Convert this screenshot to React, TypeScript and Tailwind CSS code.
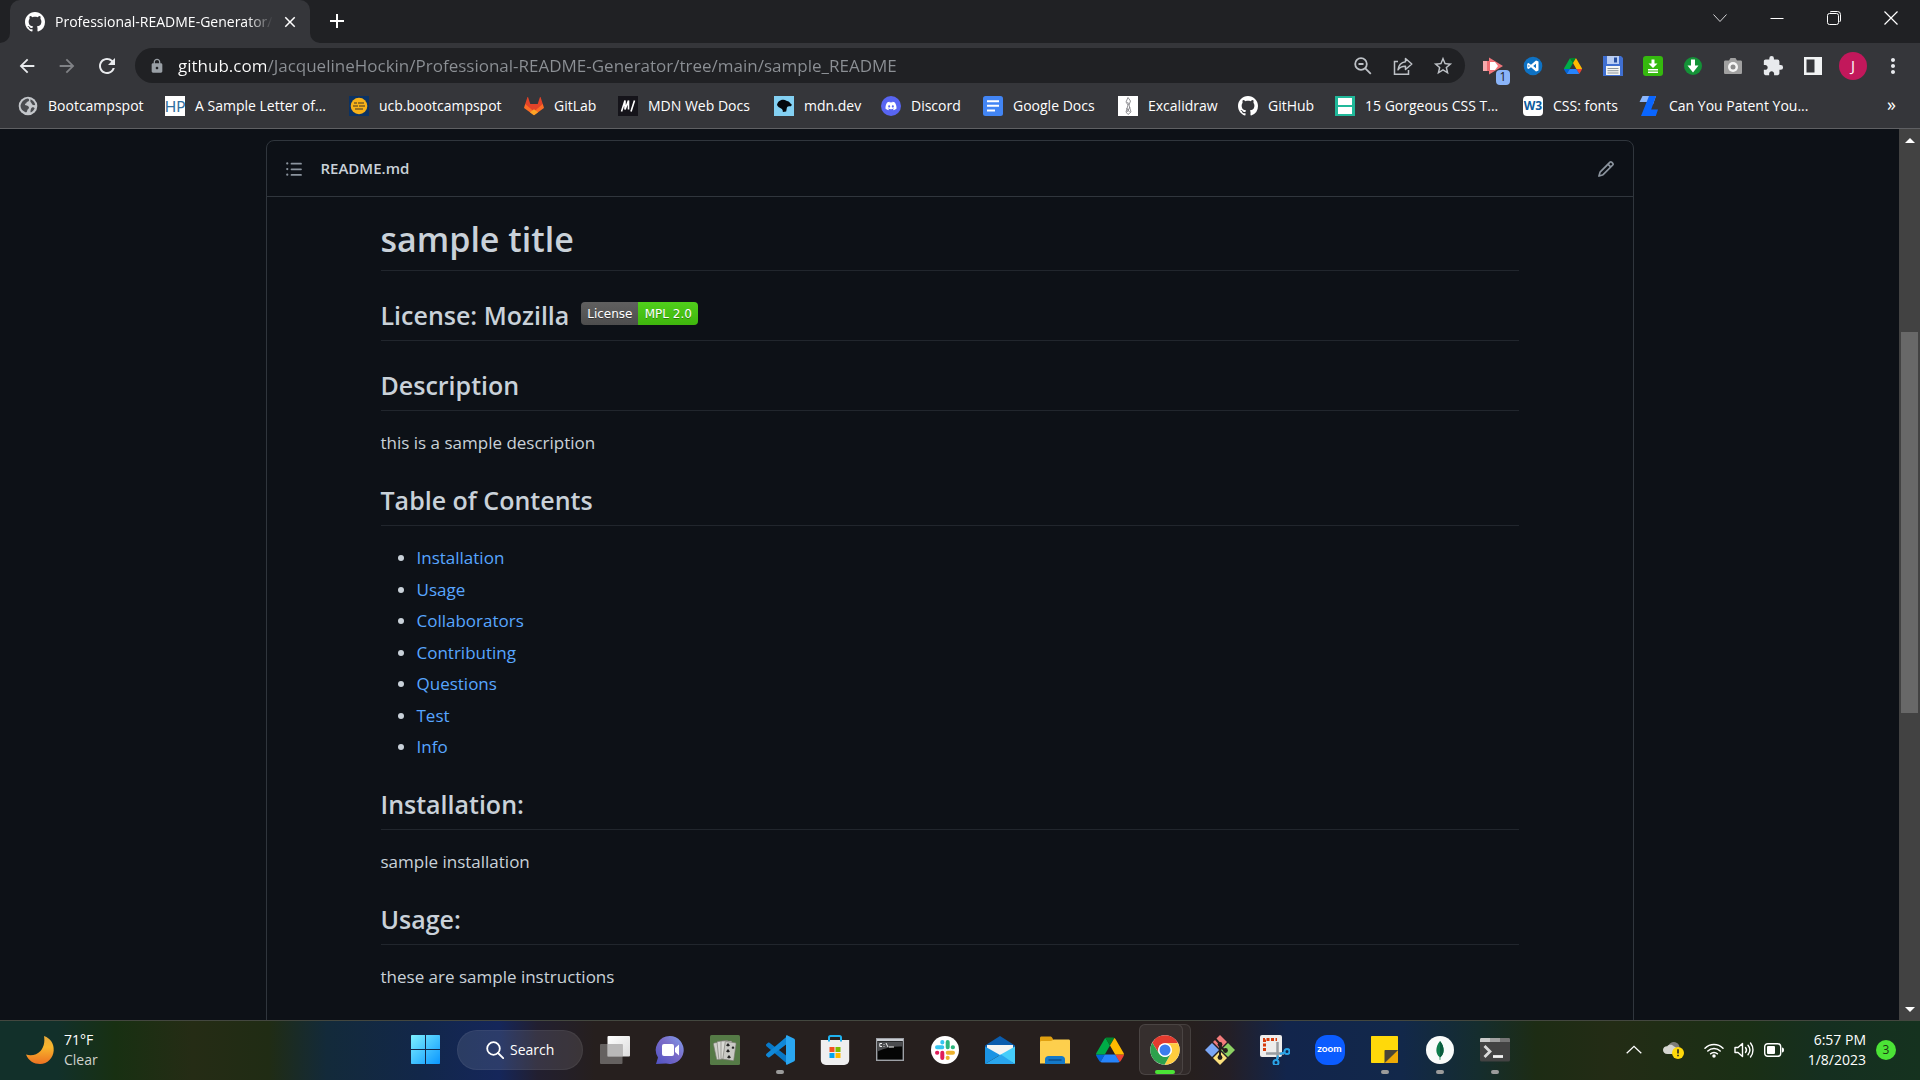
import type { ReactNode } from "react";
import {
  MdArrowBack,
  MdArrowForward,
  MdRefresh,
  MdLock,
  MdStarBorder,
  MdExtension,
  MdMoreVert,
  MdClose,
  MdAdd,
} from "react-icons/md";
import { FaDiscord } from "react-icons/fa";

/* ---------- shared logos ---------- */

function GithubMark() {
  return (
    <svg viewBox="0 0 16 16" className="size-5 shrink-0" fill="#fff" aria-hidden="true">
      <path d="M8 0C3.58 0 0 3.58 0 8c0 3.54 2.29 6.53 5.47 7.59.4.07.55-.17.55-.38 0-.19-.01-.82-.01-1.49-2.01.37-2.53-.49-2.69-.94-.09-.23-.48-.94-.82-1.13-.28-.15-.68-.52-.01-.53.63-.01 1.08.58 1.23.82.72 1.21 1.87.87 2.33.66.07-.52.28-.87.51-1.07-1.78-.2-3.64-.89-3.64-3.95 0-.87.31-1.59.82-2.15-.08-.2-.36-1.02.08-2.12 0 0 .67-.21 2.2.82.64-.18 1.32-.27 2-.27.68 0 1.36.09 2 .27 1.53-1.04 2.2-.82 2.2-.82.44 1.1.16 1.92.08 2.12.51.56.82 1.27.82 2.15 0 3.07-1.87 3.75-3.65 3.95.29.25.54.73.54 1.48 0 1.07-.01 1.93-.01 2.2 0 .21.15.46.55.38A8.013 8.013 0 0 0 16 8c0-4.42-3.58-8-8-8z" />
    </svg>
  );
}

function ListIcon() {
  return (
    <svg viewBox="0 0 16 16" className="size-[18px]" fill="currentColor" aria-hidden="true">
      <path d="M5.75 2.5h8.5a.75.75 0 0 1 0 1.5h-8.5a.75.75 0 0 1 0-1.5Zm0 5h8.5a.75.75 0 0 1 0 1.5h-8.5a.75.75 0 0 1 0-1.5Zm0 5h8.5a.75.75 0 0 1 0 1.5h-8.5a.75.75 0 0 1 0-1.5ZM2 14a1 1 0 1 1 0-2 1 1 0 0 1 0 2Zm1-6a1 1 0 1 1-2 0 1 1 0 0 1 2 0ZM2 4a1 1 0 1 1 0-2 1 1 0 0 1 0 2Z" />
    </svg>
  );
}

function PencilIcon() {
  return (
    <svg viewBox="0 0 16 16" className="size-[18px]" fill="currentColor" aria-hidden="true">
      <path d="M11.013 1.427a1.75 1.75 0 0 1 2.474 0l1.086 1.086a1.75 1.75 0 0 1 0 2.474l-8.61 8.61c-.21.21-.47.364-.756.445l-3.251.93a.75.75 0 0 1-.927-.928l.929-3.25c.081-.286.235-.547.445-.758l8.61-8.61Zm.176 4.823L9.75 4.81l-6.286 6.287a.253.253 0 0 0-.064.108l-.558 1.953 1.953-.558a.253.253 0 0 0 .108-.064Zm1.238-3.763a.25.25 0 0 0-.354 0L10.811 3.75l1.439 1.44 1.263-1.263a.25.25 0 0 0 0-.354Z" />
    </svg>
  );
}

function DriveLogo({ className }: { className: string }) {
  return (
    <svg viewBox="0 0 87.3 78" className={className} aria-hidden="true">
      <path d="m6.6 66.85 3.85 6.65c.8 1.4 1.95 2.5 3.3 3.3l13.75-23.8h-27.5c0 1.55.4 3.1 1.2 4.5z" fill="#0066da" />
      <path d="m43.65 25-13.75-23.8c-1.35.8-2.5 1.9-3.3 3.3l-25.4 44a9.06 9.06 0 0 0 -1.2 4.5h27.5z" fill="#00ac47" />
      <path d="m73.55 76.8c1.35-.8 2.5-1.9 3.3-3.3l1.6-2.75 7.65-13.25c.8-1.4 1.2-2.95 1.2-4.5h-27.5l5.85 11.5z" fill="#ea4335" />
      <path d="m43.65 25 13.75-23.8c-1.35-.8-2.9-1.2-4.5-1.2h-18.5c-1.6 0-3.15.45-4.5 1.2z" fill="#00832d" />
      <path d="m59.8 53h-32.3l-13.75 23.8c1.35.8 2.9 1.2 4.5 1.2h50.8c1.6 0 3.15-.45 4.5-1.2z" fill="#2684fc" />
      <path d="m73.4 26.5-12.7-22c-.8-1.4-1.95-2.5-3.3-3.3l-13.75 23.8 16.15 28h27.45c0-1.55-.4-3.1-1.2-4.5z" fill="#ffba00" />
    </svg>
  );
}

/* ---------- bookmark icons ---------- */

function GlobeIcon() {
  return (
    <svg viewBox="0 0 20 20" className="size-5">
      <circle cx="10" cy="10" r="9.3" fill="#c4c7cb" />
      <path d="M10 2.6c2 1 1.2 3-.6 3.2-1 .2-.6 1.5-1.6 1.8-1 .3-1.2 1.2-.2 1.6 1.6.5 3.4.8 3.4 2.4 0 1.4-1.7 1.7-1.9 3.3-.1 1-.8 1.7-1.7 1.3C4.6 15 2.5 12.8 2.5 9.8 3.5 6 6 3 10 2.6Z" fill="#4a4c50" />
      <path d="M12.5 3.2c2.4.9 4.3 3 4.7 5.6-1.3 1-3-.1-3.5-1.3-.4-1-1.6-1.3-1.3-2.5Z M14.5 11.2c1 0 1.9.5 2.2 1-.7 1.9-2.2 3.4-4 4.2-.5-1.6.3-5 1.8-5.2Z" fill="#4a4c50" />
    </svg>
  );
}

function HpIcon() {
  return (
    <span className="flex size-5 items-center justify-center bg-white font-['Lato',sans-serif] text-[15px] leading-5 text-[#2f6f9f]">
      HP
    </span>
  );
}

function UcbIcon() {
  return (
    <svg viewBox="0 0 20 20" className="size-5">
      <rect width="20" height="20" fill="#0b3263" />
      <circle cx="10" cy="10" r="8.3" fill="#f7b219" />
      <path d="M5 7h3M9 7h6M4 10h5M10 10h6M6 13h8" stroke="#7c5f22" strokeWidth="1.5" />
    </svg>
  );
}

function GitlabIcon() {
  return (
    <svg viewBox="0 0 20 20" className="size-5">
      <path d="M1.2 8 .1 11.4c-.1.3 0 .7.3.9L10 19.2 19.6 12.3c.3-.2.4-.6.3-.9L18.8 8Z" fill="#fc6d26" />
      <path d="M1.2 8h5.1L4.1 1.2c-.1-.4-.6-.4-.7 0ZM18.8 8h-5.1l2.2-6.8c.1-.4.6-.4.7 0Z" fill="#e24329" />
      <path d="M1.2 8h17.6L10 15.5Z" fill="#e24329" />
      <path d="m6 16.3 4-3 4 3-4 2.9Z" fill="#fca326" />
    </svg>
  );
}

function MdnIcon() {
  return (
    <svg viewBox="0 0 20 20" className="size-5">
      <rect width="20" height="20" fill="#15141a" />
      <path d="M3.500 15.500 7 4.500v9l3.500-9v9M13 15.500l3.500-11" fill="none" stroke="#fff" strokeWidth="1.6" />
    </svg>
  );
}

function MdnDevIcon() {
  return (
    <svg viewBox="0 0 20 20" className="size-5">
      <rect width="20" height="20" fill="#83d0f2" />
      <path d="M3 9c.5-3 3-5.5 6.500-5.300 2 0 3 1.200 4.500 1.500 1.500.5 1.800 2 3.600 3 .3 1.500-.6 2.300-2 2-1.500-.3-2.500.4-2.800 1.800l-.6 3.500-3.400.5c.3-1.700-.4-3-1.800-3.600C5.500 11.600 4 11 3 9Z" fill="#05080c" />
    </svg>
  );
}

function DocsIcon() {
  return (
    <svg viewBox="0 0 20 20" className="size-5">
      <rect width="20" height="20" rx="2.5" fill="#4285f4" />
      <path d="M4 5.3h12M4 9.8h12M4 14.5h8" stroke="#fff" strokeWidth="2" />
    </svg>
  );
}

function ExcalidrawIcon() {
  return (
    <svg viewBox="0 0 20 20" className="size-5">
      <rect width="20" height="20" fill="#fff" />
      <path d="m8 6 2-4.500L12.500 5 11 9l2 7-3 2.500L8 16l2-7Zm1.500 0L11 9M8.500 12l3 4M12 11l-3 5" fill="none" stroke="#77777c" strokeWidth=".8" />
    </svg>
  );
}

function GorgeousIcon() {
  return (
    <svg viewBox="0 0 20 20" className="size-5">
      <rect width="20" height="20" fill="#20b89a" />
      <path d="M3 2h14v7H3Zm0 9h14v7H3Z" fill="#fff" />
    </svg>
  );
}

function W3Icon() {
  return (
    <span className="flex size-5 items-center justify-center rounded-sm bg-white font-['Open_Sans',sans-serif] text-xs font-bold leading-5 text-[#0b5a9c]">
      W3
    </span>
  );
}

function PatentIcon() {
  return (
    <svg viewBox="0 0 20 20" className="size-5">
      <path d="M3.5 0H17l-3 8.500H7.300l.9-2.500H.5Z" fill="#8db7fb" />
      <path d="M10 0h7l-4.800 13.500H19L16.800 20H2Z" fill="#0a66ff" />
    </svg>
  );
}

const bookmarks: { label: string; icon: ReactNode; width: string }[] = [
  { label: "Bootcampspot", icon: <GlobeIcon />, width: "w-[147px]" },
  { label: "A Sample Letter of...", icon: <HpIcon />, width: "w-[184px]" },
  { label: "ucb.bootcampspot", icon: <UcbIcon />, width: "w-[175px]" },
  { label: "GitLab", icon: <GitlabIcon />, width: "w-[94px]" },
  { label: "MDN Web Docs", icon: <MdnIcon />, width: "w-[156px]" },
  { label: "mdn.dev", icon: <MdnDevIcon />, width: "w-[107px]" },
  {
    label: "Discord",
    icon: (
      <span className="flex size-5 items-center justify-center rounded-full bg-[#5865f2]">
        <FaDiscord className="size-3 text-white" />
      </span>
    ),
    width: "w-[102px]",
  },
  { label: "Google Docs", icon: <DocsIcon />, width: "w-[135px]" },
  { label: "Excalidraw", icon: <ExcalidrawIcon />, width: "w-[120px]" },
  { label: "GitHub", icon: <GithubMark />, width: "w-[97px]" },
  { label: "15 Gorgeous CSS T...", icon: <GorgeousIcon />, width: "w-[188px]" },
  { label: "CSS: fonts", icon: <W3Icon />, width: "w-[116px]" },
  { label: "Can You Patent You...", icon: <PatentIcon />, width: "w-[170px]" },
];

/* ---------- browser chrome ---------- */

function TabStrip() {
  const control = "flex h-9 w-[57px] items-center justify-center";
  return (
    <div className="flex h-[43px] items-start bg-[#202124] pl-[10px]">
      <div className="relative flex h-[43px] w-[300px] items-center rounded-t-[10px] bg-[#35363a] pl-[15px] pr-2">
        <GithubMark />
        <span className="ml-[10px] w-[218px] overflow-hidden whitespace-nowrap text-sm text-white [mask-image:linear-gradient(90deg,#000_88%,transparent)]">
          Professional-README-Generator/
        </span>
        <button aria-label="Close tab" className="ml-auto flex size-6 items-center justify-center text-white">
          <MdClose className="size-[18px]" />
        </button>
        <svg viewBox="0 0 10 10" className="absolute -left-[10px] bottom-0 size-[10px]">
          <path d="M10 0v10H0A10 10 0 0 0 10 0Z" fill="#35363a" />
        </svg>
        <svg viewBox="0 0 10 10" className="absolute -right-[10px] bottom-0 size-[10px]">
          <path d="M0 0v10h10A10 10 0 0 1 0 0Z" fill="#35363a" />
        </svg>
      </div>
      <button aria-label="New tab" className="ml-[15px] flex h-[42px] w-6 items-center justify-center text-white">
        <MdAdd className="size-6" />
      </button>
      <div className="ml-auto flex pr-px text-white">
        <button aria-label="Search tabs" className={control}>
          <svg viewBox="0 0 14 14" className="size-[14px]">
            <path d="m.5 3.5 6.500 7 6.500-7" fill="none" stroke="#d5d6d8" />
          </svg>
        </button>
        <button aria-label="Minimize" className={control}>
          <svg viewBox="0 0 14 14" className="size-[14px]">
            <path d="M.5 7.5h13" stroke="currentColor" />
          </svg>
        </button>
        <button aria-label="Restore" className={control}>
          <svg viewBox="0 0 14 14" className="size-[14px]">
            <rect x=".5" y="2.500" width="11" height="11" rx="2" fill="none" stroke="currentColor" />
            <path d="M3 1C3.500.7 4 .5 5 .5h5.500a3 3 0 0 1 3 3V9c0 1-.3 1.500-1 2" fill="none" stroke="currentColor" />
          </svg>
        </button>
        <button aria-label="Close" className={control}>
          <svg viewBox="0 0 14 14" className="size-[14px]">
            <path d="m.5.5 13 13m0-13-13 13" stroke="currentColor" strokeWidth="1.2" />
          </svg>
        </button>
      </div>
    </div>
  );
}

const extensions: { name: string; icon: ReactNode }[] = [
  {
    name: "Screencast, 1 alert",
    icon: (
      <span className="relative flex size-5 items-center justify-center">
        <svg viewBox="0 0 20 20" className="size-5">
          <path d="M6 1.5 20 10 6 18.5Z" fill="#f2777c" />
          <path d="M0 5h11v10H0Z" fill="#ef6e73" />
          <path d="M7 6h5l3 4-3 4H7Z" fill="#fff" />
          <path d="M0 5h4v10H0Z" fill="#f6a9ac" />
        </svg>
        <span className="absolute -bottom-[9px] -right-[7px] flex h-[15px] w-[14px] items-center justify-center rounded-sm bg-[#8ab4f8] text-xs leading-none text-[#202124]">
          1
        </span>
      </span>
    ),
  },
  {
    name: "Code viewer",
    icon: (
      <svg viewBox="0 0 20 20" className="size-5">
        <circle cx="10" cy="10" r="9.3" fill="#0e72c4" />
        <path d="m13 4.500 2.500 1v9l-2.500 1-5-4.200L5.500 13 4.200 12.200V7.800L5.500 7 8 8.700Zm0 3.300L10.200 10 13 12.200ZM5.500 8.800v2.400L6.800 10Z" fill="#fff" fillRule="evenodd" />
      </svg>
    ),
  },
  { name: "Google Drive", icon: <DriveLogo className="size-[18px]" /> },
  {
    name: "Save page",
    icon: (
      <svg viewBox="0 0 20 20" className="size-5">
        <path d="M0 0h18l2 2v18H0Z" fill="#3f6fd1" />
        <path d="M4 0h12v8H4Z" fill="#b9cdf3" />
        <path d="M11 1.500h3v5h-3Z" fill="#274f9f" />
        <path d="M3 10h14v9H3Z" fill="#f4f6f4" />
        <path d="M4.500 12.500h11M4.500 14.700h11M4.500 17h11" stroke="#8c949a" />
      </svg>
    ),
  },
  {
    name: "Download helper",
    icon: (
      <svg viewBox="0 0 20 20" className="size-5">
        <rect width="20" height="20" rx="3" fill="#35b90e" />
        <path d="M8.500 3.500h3v4h3L10 12 5.500 7.500h3ZM5 13h10v1.500H5Zm0 2.500h10V17H5Z" fill="#fff" />
      </svg>
    ),
  },
  {
    name: "Downloads",
    icon: (
      <svg viewBox="0 0 20 20" className="size-5">
        <circle cx="10" cy="10" r="9" fill="#149237" />
        <path d="M8 3.500h4v6h3.500L10 16.500 4.500 9.500H8Z" fill="#fff" />
      </svg>
    ),
  },
  {
    name: "Screenshot",
    icon: (
      <svg viewBox="0 0 20 20" className="size-5">
        <path d="M2.500 4.500H6L7.500 2h5L14 4.500h3.500c1 0 1.500.5 1.500 1.500v10.500c0 1-.5 1.500-1.500 1.500h-15C1.500 18 1 17.500 1 16.500V6c0-1 .5-1.500 1.500-1.500Z" fill="#a1a1a1" />
        <circle cx="10" cy="11" r="5" fill="#f5f5f5" />
        <circle cx="10" cy="11" r="2.5" fill="#8c8c8c" />
      </svg>
    ),
  },
  { name: "Extensions", icon: <MdExtension className="size-[22px] text-[#e8eaed]" /> },
  {
    name: "Side panel",
    icon: (
      <svg viewBox="0 0 18 18" className="size-[18px]">
        <path d="M0 0h18v18H0Zm2.500 2.500v13h8v-13Z" fill="#f1f3f4" fillRule="evenodd" />
      </svg>
    ),
  },
  {
    name: "Profile J",
    icon: (
      <span className="flex size-7 items-center justify-center rounded-full bg-[#c2185b] text-[15px] leading-none text-white">
        J
      </span>
    ),
  },
  { name: "Menu", icon: <MdMoreVert className="size-6 text-[#e8eaed]" /> },
];

function Toolbar() {
  const nav = "flex h-9 w-10 items-center justify-center text-[#e8eaed]";
  return (
    <div className="flex h-[45px] items-center gap-2 px-[7px]">
      <div className="flex">
        <button aria-label="Back" className={nav}>
          <MdArrowBack className="size-[22px]" />
        </button>
        <button aria-label="Forward" className="flex h-9 w-10 items-center justify-center text-[#808286]">
          <MdArrowForward className="size-[22px]" />
        </button>
        <button aria-label="Reload" className={nav}>
          <MdRefresh className="size-6" />
        </button>
      </div>
      <div className="flex h-[35px] min-w-0 flex-1 items-center rounded-full bg-[#202124] pl-[14px] pr-0.5">
        <MdLock className="size-4 shrink-0 text-[#9aa0a6]" />
        <input
          aria-label="Address"
          readOnly
          value="github.com/JacquelineHockin/Professional-README-Generator/tree/main/sample_README"
          className="ml-[13px] h-[35px] min-w-0 flex-1 bg-[linear-gradient(90deg,#fff_88px,#8c9095_88px)] bg-clip-text text-[17px] leading-[35px] text-transparent outline-none"
        />
        <div className="flex">
          <button aria-label="Zoom" className={nav}>
            <svg viewBox="0 0 18 18" className="size-[18px]" fill="none" stroke="#bdc1c6" strokeWidth="1.8">
              <circle cx="7" cy="7" r="5.8" />
              <path d="m11.300 11.300 5.500 5.500M4.500 7h5" />
            </svg>
          </button>
          <button aria-label="Share" className={nav}>
            <svg viewBox="0 0 20 20" className="size-5" fill="none" stroke="#bdc1c6" strokeWidth="1.5">
              <path d="M5 5.500H1.500v12.800h14V14" />
              <path d="M12.500 2.500 18.800 8l-6.300 5.500V10.300C9.500 10.200 7 11 5 13.800 5.500 9.500 8 6.300 12.500 5.700Z" strokeLinejoin="round" />
            </svg>
          </button>
          <button aria-label="Bookmark" className={nav}>
            <MdStarBorder className="size-[22px] text-[#bdc1c6]" />
          </button>
        </div>
      </div>
      <div className="flex">
        {extensions.map((e) => (
          <button key={e.name} aria-label={e.name} className="flex h-9 w-10 items-center justify-center">
            {e.icon}
          </button>
        ))}
      </div>
    </div>
  );
}

function BookmarkBar() {
  return (
    <nav aria-label="Bookmarks" className="flex h-[41px] items-center border-b border-[#5f6063] pb-1 pl-[18px] pr-6">
      {bookmarks.map((b) => (
        <a key={b.label} href="#" className={`${b.width} flex shrink-0 items-center gap-[10px] text-sm text-white`}>
          <span className="shrink-0">{b.icon}</span>
          <span className="whitespace-nowrap">{b.label}</span>
        </a>
      ))}
      <button aria-label="More bookmarks" className="ml-auto pb-1 text-lg leading-none text-white">
        »
      </button>
    </nav>
  );
}

/* ---------- page ---------- */

const contents = ["Installation", "Usage", "Collaborators", "Contributing", "Questions", "Test", "Info"];

function Heading({ id, children }: { id?: string; children: ReactNode }) {
  return (
    <h2
      id={id}
      className="mt-[27px] flex items-center gap-3 border-b border-[#21262d] pb-2 text-[25px] font-semibold leading-[34px]"
    >
      {children}
    </h2>
  );
}

function Paragraph({ children }: { children: ReactNode }) {
  return <p className="mt-[18px] text-[17px] leading-[27px]">{children}</p>;
}

function LicenseBadge() {
  return (
    <span className="mb-1 flex h-[23px] overflow-hidden rounded-[4px] font-['DejaVu_Sans',sans-serif] text-xs font-normal leading-6 text-white [text-shadow:0_1px_0_rgba(0,0,0,0.35)]">
      <span className="flex w-[57px] justify-center bg-gradient-to-b from-[#606060] to-[#4d4d4d]">License</span>
      <span className="flex w-[60px] justify-center bg-gradient-to-b from-[#50cf1b] to-[#3fb60d]">MPL 2.0</span>
    </span>
  );
}

function Readme() {
  return (
    <main className="min-w-0 flex-1 overflow-hidden pt-[11px]">
      <div className="mx-auto max-w-[1368px] rounded-t-lg border border-[#30363d]">
        <div className="flex h-[56px] items-center border-b border-[#30363d] px-[18px]">
          <button aria-label="Table of contents" className="text-[#8b949e]">
            <ListIcon />
          </button>
          <a href="#readme" className="ml-[18px] text-[15px] font-semibold text-[#c9d1d9]">
            README.md
          </a>
          <button aria-label="Edit file" className="ml-auto text-[#8b949e]">
            <PencilIcon />
          </button>
        </div>
        <article id="readme" className="mx-auto max-w-[1138px] pb-16 pt-[18px] text-[#c9d1d9]">
          <h1 className="border-b border-[#21262d] pb-[7px] text-[34px] font-semibold leading-[48px]">
            sample title
          </h1>
          <Heading>
            License: Mozilla <LicenseBadge />
          </Heading>
          <Heading>Description</Heading>
          <Paragraph>this is a sample description</Paragraph>
          <Heading>Table of Contents</Heading>
          <ul className="mt-[18px] list-disc pl-9 text-[17px] leading-[27px]">
            {contents.map((c) => (
              <li key={c} className="odd:mt-1 even:mt-[5px] first:mt-0">
                <a href={`#${c.toLowerCase()}`} className="text-[#58a6ff]">
                  {c}
                </a>
              </li>
            ))}
          </ul>
          <Heading id="installation">Installation:</Heading>
          <Paragraph>sample installation</Paragraph>
          <Heading id="usage">Usage:</Heading>
          <Paragraph>these are sample instructions</Paragraph>
        </article>
      </div>
    </main>
  );
}

function ScrollRail() {
  return (
    <div className="flex w-[21px] shrink-0 flex-col items-center bg-[#424242]">
      <svg viewBox="0 0 10 5" className="mb-[9px] mt-[9px] h-[5px] w-[10px]">
        <path d="M0 5 5 0l5 5Z" fill="#fff" />
      </svg>
      <div className="flex-[180]" />
      <div className="w-[17px] flex-[381] bg-[#686868]" />
      <div className="flex-[285]" />
      <svg viewBox="0 0 10 5" className="mb-[8px] mt-[9px] h-[5px] w-[10px]">
        <path d="m0 0 5 5 5-5Z" fill="#fff" />
      </svg>
    </div>
  );
}

/* ---------- taskbar ---------- */

function ChromeLogo() {
  return (
    <svg viewBox="0 0 48 48" className="size-[30px]">
      <circle cx="24" cy="24" r="23.5" fill="#fff" />
      <path d="M24 13h20.700A23.500 23.500 0 0 0 3.600 12.300L14.500 29.500A11 11 0 0 1 24 13Z" fill="#e33b2e" />
      <path d="M33.500 29.500 23.200 47.500A23.500 23.500 0 0 0 44.700 13H24a11 11 0 0 1 9.500 16.500Z" fill="#ffcd3f" />
      <path d="M14.500 29.500 3.600 12.300A23.500 23.500 0 0 0 23.200 47.500l10.300-18a11 11 0 0 1-19 0Z" fill="#2da14c" />
      <circle cx="24" cy="24" r="11" fill="#fff" />
      <circle cx="24" cy="24" r="8.8" fill="#3b7ded" />
    </svg>
  );
}

const apps: { name: string; icon: ReactNode; state?: "open" | "active" }[] = [
  {
    name: "Task view",
    icon: (
      <svg viewBox="0 0 30 30" className="size-[30px]">
        <defs>
          <linearGradient id="tv" x1="0" y1="0" x2="1" y2="1">
            <stop offset="0" stopColor="#fff" />
            <stop offset="1" stopColor="#dcdcdc" />
          </linearGradient>
        </defs>
        <rect x="7.5" y="1" width="22.5" height="20.5" rx="1" fill="url(#tv)" />
        <rect x="0" y="9" width="22.5" height="20" rx="1" fill="#7b7877" fillOpacity=".75" />
        <rect x="7.5" y="9" width="15" height="12.5" fill="#b9b8b8" />
      </svg>
    ),
  },
  {
    name: "Chat",
    icon: (
      <svg viewBox="0 0 30 30" className="size-[30px]">
        <defs>
          <linearGradient id="ct" x1="1" y1="0" x2="0" y2="1">
            <stop offset="0" stopColor="#7fa0ef" />
            <stop offset=".45" stopColor="#7b6cc8" />
            <stop offset="1" stopColor="#4f52c4" />
          </linearGradient>
        </defs>
        <path d="M15 1a14 14 0 1 1-4 27.500L1 29l2-6.500A14 14 0 0 1 15 1Z" fill="url(#ct)" />
        <rect x="7" y="9" width="12" height="12" rx="2" fill="#fff" />
        <path d="m20 13 4-3.500v11L20 17Z" fill="#fff" />
      </svg>
    ),
  },
  {
    name: "Solitaire",
    icon: (
      <svg viewBox="0 0 30 30" className="size-[30px]">
        <rect width="30" height="30" rx="1.5" fill="#557a46" />
        <g stroke="#77776f" strokeWidth=".6">
          <rect x="5" y="7" width="11" height="17" rx="1" fill="#cfcfca" transform="rotate(-12 10 16)" />
          <rect x="8" y="6" width="11" height="18" rx="1" fill="#d6d6d2" transform="rotate(-6 13 16)" />
          <rect x="11" y="6" width="11" height="18" rx="1" fill="#dadad6" />
          <rect x="14" y="7" width="11" height="18" rx="1" fill="#c9c9c5" transform="rotate(8 19 16)" />
        </g>
        <path d="m18 8 2 2.500-2 1-2-1Zm0 6 2 2.500-2 1-2-1Zm1 6 2 2.500-2 1-2-1ZM23 11l1.500 2-1.500 1-1.500-1Z" fill="#222" />
      </svg>
    ),
  },
  {
    name: "Visual Studio Code",
    state: "open",
    icon: (
      <svg viewBox="0 0 30 30" className="size-[30px]">
        <path d="M1 9.500 3 7.800c.5-.4 1-.4 1.500 0L23 22v7.500L1.200 11Z" fill="#0879c9" />
        <path d="M1 20.500 3 22.200c.5.4 1 .4 1.500 0L23 8V.5L1.200 19Z" fill="#1088d8" />
        <path d="m22 .3 6.800 3.200c.7.300 1.200 1 1.200 1.800v19.400c0 .8-.5 1.500-1.200 1.800L22 29.700c-.7.300-1-.2-1-.7V1c0-.6.400-1 1-.7Z" fill="#2aa7f2" />
      </svg>
    ),
  },
  {
    name: "Microsoft Store",
    icon: (
      <svg viewBox="0 0 30 30" className="size-[30px]">
        <path d="M9 6V2.500C9 1.500 9.500 1 10.500 1h9c1 0 1.500.5 1.500 1.500V6" fill="none" stroke="#1fb1ee" strokeWidth="2" />
        <path d="M.8 5h28.400v20a5 5 0 0 1-5 5H5.800a5 5 0 0 1-5-5Z" fill="#efeff0" />
        <path d="M9 4v2.500M21 4v2.500" stroke="#1fb1ee" strokeWidth="2" />
        <path d="M9.500 12h5v5h-5Z" fill="#f25022" />
        <path d="M15.500 12h5v5h-5Z" fill="#7fba00" />
        <path d="M9.500 18h5v5h-5Z" fill="#00a4ef" />
        <path d="M15.500 18h5v5h-5Z" fill="#ffb900" />
      </svg>
    ),
  },
  {
    name: "Command Prompt",
    icon: (
      <svg viewBox="0 0 28 24" className="h-6 w-7">
        <rect x=".7" y=".7" width="26.6" height="21.6" fill="#050505" stroke="#9da0a6" strokeWidth="1.4" />
        <path d="M1 2h26" stroke="#c9ccd2" strokeWidth="2" />
        <path d="M1.500 3.500h25v5c-8-.5-17 1-25 5Z" fill="#4b4c4f" />
        <path d="M6 5.500H3.800v3H6M8 6v.8M8 8v.8M10 5l2 4M13 9h5" fill="none" stroke="#eee" />
      </svg>
    ),
  },
  {
    name: "Slack",
    icon: (
      <svg viewBox="0 0 28 28" className="size-7">
        <circle cx="14" cy="14" r="14" fill="#fff" />
        <g fill="none" strokeWidth="4" strokeLinecap="round">
          <path d="M11.300 6v.5M6 11.300h5.300" stroke="#36c5f0" />
          <path d="M16.700 6v5.300M21.700 11.300h.3" stroke="#2eb67d" />
          <path d="M16.700 16.700H22M16.700 21.700v.3" stroke="#ecb22e" />
          <path d="M11.300 16.700V22M6 16.700h.3" stroke="#e01e5a" />
        </g>
      </svg>
    ),
  },
  {
    name: "Mail",
    icon: (
      <svg viewBox="0 0 30 28" className="h-7 w-[30px]">
        <path d="M0 9.500 15 0l15 9.500V12H0Z" fill="#0a5cad" />
        <path d="M2 9h26v10H2Z" fill="#f4f4f2" />
        <path d="M0 10.500 15 19l-15 9Z" fill="#1b94e4" />
        <path d="M30 10.500 14 19.500 30 28Z" fill="#45cdfa" />
        <path d="M0 28 16 18.500 30 28Z" fill="#2aa6ee" />
      </svg>
    ),
  },
  {
    name: "File Explorer",
    icon: (
      <svg viewBox="0 0 30 28" className="h-7 w-[30px]">
        <path d="M0 2c0-1 .5-1.500 1.500-1.500H10c1 0 1.500.3 2 1l2 3V10H0Z" fill="#e0a010" />
        <path d="M0 6.500C0 5.700.5 5 1.500 5H11l3-1.500h14.500c1 0 1.500.5 1.500 1.500v22.500H0Z" fill="#fdcf4d" />
        <path d="M5 28v-4.500C5 21.500 6.500 20 8.500 20h13c2 0 3.500 1.500 3.500 3.500V28Z" fill="#1479c8" />
        <path d="M9 24h12" stroke="#0a4e8c" strokeWidth="1.5" strokeLinecap="round" />
      </svg>
    ),
  },
  { name: "Google Drive", icon: <DriveLogo className="h-[26px] w-7" /> },
  { name: "Google Chrome", state: "active", icon: <ChromeLogo /> },
  {
    name: "Git",
    icon: (
      <svg viewBox="0 0 30 30" className="size-[30px]">
        <path d="m15 0 7 7-7 7-7-7Z" fill="#f27b7b" />
        <path d="m7 8 7 7-7 7-7-7Z" fill="#7ba6f5" />
        <path d="m23 8 7 7-7 7-7-7Z" fill="#8cd163" />
        <path d="m15 16 7 7-7 7-7-7Z" fill="#fbe07c" />
        <path d="M10 3.500 15 9v15M15 11l6 6" fill="none" stroke="#241d1d" strokeWidth="2" />
        <circle cx="15" cy="9.5" r="2.4" fill="#241d1d" />
        <circle cx="20.5" cy="15.5" r="2.4" fill="#241d1d" />
        <circle cx="15" cy="22.5" r="2.4" fill="#241d1d" />
      </svg>
    ),
  },
  {
    name: "Snipping Tool",
    icon: (
      <svg viewBox="0 0 30 30" className="size-[30px]">
        <rect width="22" height="22" rx="2" fill="#eeedec" />
        <path d="M4.500 16V4.500H17" fill="none" stroke="#d83b0b" strokeWidth="3" strokeDasharray="3 1.5" />
        <path d="M17.500 7v17M6 18.500h18" stroke="#9a9da1" strokeWidth="2.5" />
        <g fill="none" stroke="#2aa4e8" strokeWidth="2">
          <circle cx="27" cy="16.5" r="2.5" />
          <circle cx="16" cy="27.5" r="2.5" />
          <path d="m20 19 4.500-1.500M18 20.500l-1 4.500" />
        </g>
      </svg>
    ),
  },
  {
    name: "Zoom",
    icon: (
      <span className="flex size-[30px] items-center justify-center rounded-xl bg-[#0b5cff] pb-1 font-['Lato',sans-serif] text-[10px] font-bold leading-none text-white">
        zoom
      </span>
    ),
  },
  {
    name: "Sticky Notes",
    state: "open",
    icon: (
      <svg viewBox="0 0 27 27" className="size-[27px]">
        <path d="M0 1c0-.6.400-1 1-1h25c.6 0 1 .4 1 1v13L13.500 27H1c-.6 0-1-.4-1-1Z" fill="#ffd90a" />
        <path d="M27 14v12c0 .6-.4 1-1 1H13.500Z" fill="#eeaa06" />
        <path d="M13.500 27V15c0-.6.400-1 1-1H27Z" fill="#4a4536" />
      </svg>
    ),
  },
  {
    name: "MongoDB Compass",
    state: "open",
    icon: (
      <svg viewBox="0 0 28 28" className="size-7">
        <circle cx="14" cy="14" r="14" fill="#f9fbfa" />
        <path d="M14 5c-5 6-4.500 13-.5 16l.2 3h.6l.2-3C18.500 18 19 11 14 5Z" fill="#0f7c4c" />
        <path d="M14 5c5 6 4.500 13 .5 16H14Z" fill="#095a3c" />
      </svg>
    ),
  },
  {
    name: "Terminal",
    state: "open",
    icon: (
      <svg viewBox="0 0 30 24" className="h-6 w-[30px]">
        <rect width="30" height="23.5" rx="1.5" fill="#434343" />
        <path d="M0 1.500C0 .5.500 0 1.500 0H10v4H0Z" fill="#c9c9c9" />
        <path d="M10 0h10v4H10Z" fill="#a0a0a0" />
        <path d="M20 0h8.500c1 0 1.500.5 1.500 1.500V4H20Z" fill="#747474" />
        <path d="m4.500 8 5.500 5.500L4.500 19" fill="none" stroke="#d9d9d9" strokeWidth="2.8" />
        <path d="M13 18.500h10" stroke="#f2f2f2" strokeWidth="2.8" />
      </svg>
    ),
  },
];

function AppButton({ name, icon, state }: { name: string; icon: ReactNode; state?: "open" | "active" }) {
  return (
    <button aria-label={name} className="relative flex h-[57px] w-[55px] items-center justify-center">
      {state === "active" && (
        <>
          <span className="absolute bottom-[3px] left-3 top-[3px] w-[42px] rounded-md border border-white/10 bg-white/5" />
          <span className="absolute bottom-[3px] left-[2px] top-[3px] w-11 rounded-md border border-white/10 bg-[#362f2e]" />
        </>
      )}
      <span className="relative">{icon}</span>
      {state === "open" && <span className="absolute bottom-1 h-1 w-2 rounded-full bg-[#9b9b9b]" />}
      {state === "active" && <span className="absolute bottom-1 h-1 w-5 rounded-full bg-[#4be336]" />}
    </button>
  );
}

function Taskbar() {
  return (
    <footer className="grid h-[60px] shrink-0 grid-cols-[1fr_auto_1fr] items-center border-t border-[#43473f] bg-[linear-gradient(90deg,#12302a_0%,#12302a_3%,#183012_6%,#252c15_10%,#202c14_14%,#132a3a_17%,#12274a_22%,#15265a_26%,#221f30_28%,#261f1e_31%,#261f1e_62%,#241f26_64%,#12254c_67%,#12284a_73%,#152d2e_77%,#1d2c14_80%,#232c15_84%,#1a2f15_91%,#152f20_95%,#15321f_100%)] pb-0.5 text-white">
      <button className="flex items-center gap-[10px] justify-self-start pl-[26px] text-left">
        <svg viewBox="0 0 28 28" className="size-7">
          <defs>
            <linearGradient id="moon" x1="0" y1="0" x2="0" y2="1">
              <stop offset="0" stopColor="#e9a93a" />
              <stop offset=".4" stopColor="#f7b52c" />
              <stop offset="1" stopColor="#ee7222" />
            </linearGradient>
          </defs>
          <path d="M18 0C25 2.500 28 8 27.700 14.500 27.300 22 21.500 28 14 28 8 28 2.500 25 0 18.500c5 1.500 11 .5 14.500-3.500S19 6 18 0Z" fill="url(#moon)" />
        </svg>
        <span className="flex flex-col text-sm leading-5">
          <span>71°F</span>
          <span className="text-[#cfd2cd]">Clear</span>
        </span>
      </button>

      <div className="flex items-center">
        <button aria-label="Start" className="flex h-[57px] w-[55px] items-center justify-center">
          <svg viewBox="0 0 29 29" className="size-[29px]">
            <defs>
              <linearGradient id="win" x1="0" y1="0" x2="1" y2="1">
                <stop offset="0" stopColor="#7df0ff" />
                <stop offset="1" stopColor="#0a96ff" />
              </linearGradient>
            </defs>
            <path d="M1 0h13v14H0V1c0-.6.400-1 1-1Zm14 0h13c.6 0 1 .4 1 1v13H15ZM0 15h14v14H1c-.6 0-1-.4-1-1Zm15 0h14v13c0 .6-.4 1-1 1H15Z" fill="url(#win)" />
          </svg>
        </button>
        <button className="mx-1 flex h-10 w-[126px] items-center gap-[6px] rounded-full border border-white/5 bg-white/10 pl-7 text-sm">
          <svg viewBox="0 0 18 18" className="size-[18px]" fill="none" stroke="#fff" strokeWidth="1.8">
            <circle cx="7.5" cy="7.5" r="6.3" />
            <path d="m12 12 5.200 5.200" strokeLinecap="round" />
          </svg>
          Search
        </button>
        {apps.map((a) => (
          <AppButton key={a.name} name={a.name} icon={a.icon} state={a.state} />
        ))}
      </div>

      <div className="flex items-center justify-self-end pr-[24px]">
        <button aria-label="Hidden icons" className="flex h-10 w-10 items-center justify-center">
          <svg viewBox="0 0 16 9" className="h-[9px] w-4">
            <path d="m.7 8.300 7.300-7 7.300 7" fill="none" stroke="#fff" strokeWidth="1.3" />
          </svg>
        </button>
        <button aria-label="OneDrive" className="flex h-10 w-10 items-center justify-center">
          <svg viewBox="0 0 21 18" className="h-[18px] w-[21px]">
            <path d="M5.500 4.500C7 1 11 0 14 2c2 1.200 2.500 3 2.500 4.500L12 10Z" fill="#7c7c78" />
            <path d="M4.500 13C1.500 13 0 11 0 9c0-2.200 2-4 4.200-3.800C6 3 9.500 3.300 11 5.500c2 .5 3 2 3 4L9 13Z" fill="#d5d5d0" />
            <circle cx="15" cy="12" r="6" fill="#ffd90a" />
            <path d="M15 8.300v4.200M15 13.800v1.500" stroke="#222" strokeWidth="1.6" />
          </svg>
        </button>
        <button aria-label="Network, sound and battery" className="flex h-10 items-center gap-[10px] px-[10px]">
          <svg viewBox="0 0 20 16" className="h-4 w-5" fill="none" stroke="#fff" strokeWidth="1.5" strokeLinecap="round">
            <path d="M1 6.200a12.800 12.800 0 0 1 18 0M3.800 9a8.800 8.800 0 0 1 12.400 0M6.600 11.800a4.800 4.800 0 0 1 6.800 0" />
            <circle cx="10" cy="14" r="1" fill="#fff" />
          </svg>
          <svg viewBox="0 0 20 18" className="h-[18px] w-5" fill="none" stroke="#fff" strokeWidth="1.4" strokeLinecap="round">
            <path d="M1 6.500h3l4.500-4v13L4 11.500H1Z" strokeLinejoin="round" />
            <path d="M11.500 6.500c1.200 1.500 1.200 3.500 0 5M14 4.300c2.300 2.800 2.300 6.600 0 9.400M16.500 2c3.300 4 3.300 10 0 14" />
          </svg>
          <svg viewBox="0 0 20 14" className="h-[14px] w-5">
            <rect x=".7" y=".7" width="16" height="12.6" rx="3" fill="none" stroke="#fff" strokeWidth="1.4" />
            <rect x="3" y="3" width="8" height="8" rx="1" fill="#fff" />
            <path d="M18 4.500c1.500.3 2 1 2 2.500s-.5 2.200-2 2.500Z" fill="#fff" />
          </svg>
        </button>
        <button className="ml-[14px] flex items-center gap-[10px] text-right">
          <span className="flex flex-col text-sm leading-5">
            <span>6:57 PM</span>
            <span>1/8/2023</span>
          </span>
          <span className="flex size-5 items-center justify-center rounded-full bg-[#4be336] text-xs leading-none text-[#1c3312]">
            3
          </span>
        </button>
      </div>
    </footer>
  );
}

export default function App() {
  return (
    <div className="flex h-screen flex-col overflow-hidden bg-[#0d1117] font-['Open_Sans','Noto_Sans',sans-serif]">
      <header className="shrink-0 bg-[#35363a]">
        <TabStrip />
        <Toolbar />
        <BookmarkBar />
      </header>
      <div className="flex min-h-0 flex-1">
        <Readme />
        <ScrollRail />
      </div>
      <Taskbar />
    </div>
  );
}
